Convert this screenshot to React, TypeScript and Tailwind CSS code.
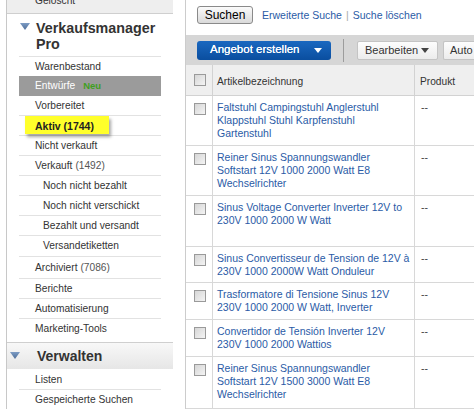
import React from "react";

const font = { fontFamily: '"Liberation Sans", Arial, sans-serif' };

function Triangle() {
  return (
    <svg width="10" height="8" viewBox="0 0 10 8" className="shrink-0">
      <defs>
        <linearGradient id="tri" x1="0" y1="0" x2="0" y2="1">
          <stop offset="0" stopColor="#7d9cc4" />
          <stop offset="1" stopColor="#4d6d98" />
        </linearGradient>
      </defs>
      <polygon points="0,0 10,0 5,7" fill="url(#tri)" />
    </svg>
  );
}

function Checkbox() {
  return (
    <div className="h-[12px] w-[12px] border border-[#9a9a9a] bg-gradient-to-br from-[#d6d6d6] to-[#f4f4f4]" />
  );
}

type NavItem = { label: string; count?: string; indent?: boolean; h?: string };

const navItems: NavItem[] = [
  { label: "Nicht verkauft" },
  { label: "Verkauft", count: "(1492)" },
  { label: "Noch nicht bezahlt", indent: true },
  { label: "Noch nicht verschickt", indent: true },
  { label: "Bezahlt und versandt", indent: true },
  { label: "Versandetiketten", indent: true, h: "h-[21px]" },
  { label: "Archiviert", count: "(7086)", h: "h-[22px]" },
  { label: "Berichte" },
  { label: "Automatisierung" },
  { label: "Marketing-Tools" },
];

const rows = [
  { title: "Faltstuhl Campingstuhl Anglerstuhl Klappstuhl Stuhl Karpfenstuhl Gartenstuhl", h: "h-[50px]" },
  { title: "Reiner Sinus Spannungswandler Softstart 12V 1000 2000 Watt E8 Wechselrichter", h: "h-[50px]" },
  { title: "Sinus Voltage Converter Inverter 12V to 230V 1000 2000 W Watt", h: "h-[51px]" },
  { title: "Sinus Convertisseur de Tension de 12V à 230V 1000 2000W Watt Onduleur", h: "h-[36px]" },
  { title: "Trasformatore di Tensione Sinus 12V 230V 1000 2000 W Watt, Inverter", h: "h-[37px]" },
  { title: "Convertidor de Tensión Inverter 12V 230V 1000 2000 Wattios", h: "h-[37px]" },
  { title: "Reiner Sinus Spannungswandler Softstart 12V 1500 3000 Watt E8 Wechselrichter", h: "h-[52px]" },
];

function Sidebar() {
  return (
    <div className="w-[185px] shrink-0">
      <div className="ml-[6px] w-[167px] border-l border-[#c8c8c8]">
        <div className="h-[14px] overflow-hidden border-b border-[#cfcfcf] bg-[#eeeeee] pl-[28px]">
          <div className="-mt-[6px] text-[10.2px] leading-[13px] text-[#333]">Gelöscht</div>
        </div>

        <div className="flex items-start gap-[6px] pl-[13px] pt-[6px]">
          <div className="pt-[3px]">
            <Triangle />
          </div>
          <div className="text-[14.3px] font-bold leading-[16px] text-[#333]">
            Verkaufsmanager
            <br />
            Pro
          </div>
        </div>

        <div className="mx-[12px] mt-[4px] text-[10.2px] text-[#333]">
          <div className="flex h-[20px] items-center border-t border-[#e2e2e2] pl-[16px]">Warenbestand</div>
          <div className="flex h-[20px] items-center gap-[8px] bg-[#9b9b9b] pl-[16px] text-white">
            Entwürfe <span className="text-[9.5px] font-bold text-[#3f9f1f]">Neu</span>
          </div>
          <div className="flex h-[20px] items-center border-b border-[#e2e2e2] pl-[16px]">Vorbereitet</div>
          <div className="relative h-[20px] border-b border-[#e2e2e2]">
            <div className="absolute left-[6px] top-0 flex h-[18px] w-[84px] items-center bg-[#ffff2b] pl-[10px] pt-[3px] text-[10.5px] font-bold text-[#222] shadow-[2px_3px_3px_rgba(0,0,0,0.35)]">
              Aktiv (1744)
            </div>
          </div>
          {navItems.map((it) => (
            <div
              key={it.label}
              className={`flex ${it.h ?? "h-[20px]"} items-center border-b border-[#e2e2e2] ${
                it.indent ? "pl-[24px]" : "pl-[16px]"
              } last:border-b-0`}
            >
              {it.label}
              {it.count ? <span className="ml-[3px] text-[#555]">{it.count}</span> : null}
            </div>
          ))}
        </div>

        <div className="mt-[3px] flex h-[27px] items-center gap-[17px] border-t border-[#cfcfcf] bg-gradient-to-b from-[#f8f8f8] to-[#e6e6e6] pl-[3px]">
          <Triangle />
          <span className="text-[14px] font-bold text-[#333]">Verwalten</span>
        </div>
        <div className="mx-[12px] text-[10.2px] text-[#333]">
          <div className="flex h-[21px] items-center border-b border-[#e2e2e2] pl-[16px] pt-[2px]">Listen</div>
          <div className="flex h-[20px] items-center pl-[16px]">Gespeicherte Suchen</div>
        </div>
      </div>
    </div>
  );
}

function Main() {
  return (
    <div className="flex min-w-0 flex-1 flex-col border-l border-[#cccccc]">
      <div className="flex h-[35px] items-start gap-[9px] pl-[11px] pt-[6px]">
        <button className="h-[18px] w-[56px] rounded-[3px] border border-[#8a8a8a] bg-gradient-to-b from-[#fbfbfb] to-[#dadada] text-[12px] leading-[16px] text-black">
          Suchen
        </button>
        <div className="flex items-center gap-[4px] pt-[2px] text-[10.5px] leading-[14px] text-[#2a5ba6]">
          <span>Erweiterte Suche</span>
          <span className="text-[#aaa]">|</span>
          <span>Suche löschen</span>
        </div>
      </div>

      <div className="flex h-[30px] items-center bg-[#d6d6d6] pl-[11px]">
        <div className="flex h-[19px] w-[134px] items-center justify-between rounded-[3px] bg-gradient-to-b from-[#1a68c0] to-[#0a4e9f] pl-[13px] pr-[9px] text-[11.5px] font-medium text-white [text-shadow:0_0_0.4px_#fff]">
          Angebot erstellen
          <svg width="8" height="5" viewBox="0 0 8 5">
            <polygon points="0,0 8,0 4,5" fill="#fff" />
          </svg>
        </div>
        <div className="ml-[12px] h-[23px] w-px bg-[#9c9c9c]" />
        <div className="ml-[13px] flex h-[19px] w-[81px] items-center gap-[3px] rounded-[2px] border border-[#c4c4c4] bg-gradient-to-b from-[#fdfdfd] to-[#ececec] pl-[7px] text-[11px] text-[#333]">
          Bearbeiten
          <svg width="8" height="5" viewBox="0 0 8 5">
            <polygon points="0,0 8,0 4,5" fill="#444" />
          </svg>
        </div>
        <div className="ml-[5px] flex h-[19px] flex-1 items-center rounded-l-[2px] border border-r-0 border-[#c4c4c4] bg-gradient-to-b from-[#fdfdfd] to-[#ececec] pl-[6px] text-[11px] text-[#333]">
          Auto
        </div>
      </div>

      <div className="grid grid-cols-[27px_202px_1fr]">
        <div className="h-[31px] border-b border-r border-[#d2d2d2] bg-[#efefef] pl-[8px] pt-[9px]">
          <Checkbox />
        </div>
        <div className="flex h-[31px] items-center border-b border-r border-[#d2d2d2] bg-[#efefef] pl-[4px] pt-[4px] text-[10.2px] text-[#333]">
          Artikelbezeichnung
        </div>
        <div className="flex h-[31px] items-center border-b border-[#d2d2d2] bg-[#efefef] pl-[5px] pt-[4px] text-[10.2px] text-[#333]">
          Produkt
        </div>
        {rows.map((r) => (
          <React.Fragment key={r.title}>
            <div className={`${r.h} border-b border-r border-[#d8d8d8] pl-[8px] pt-[7px]`}>
              <Checkbox />
            </div>
            <div
              className={`${r.h} border-b border-r border-[#d8d8d8] pl-[4px] pr-[4px] pt-[5px] text-[10.5px] leading-[12.8px] text-[#2a5ba6]`}
            >
              {r.title}
            </div>
            <div className={`${r.h} border-b border-[#d8d8d8] pl-[6px] pt-[5px] text-[10.5px] leading-[12.8px] text-[#444]`}>
              --
            </div>
          </React.Fragment>
        ))}
      </div>
    </div>
  );
}

export default function App() {
  return (
    <div className="flex h-[409px] w-[474px] overflow-hidden bg-white" style={font}>
      <Sidebar />
      <Main />
    </div>
  );
}
